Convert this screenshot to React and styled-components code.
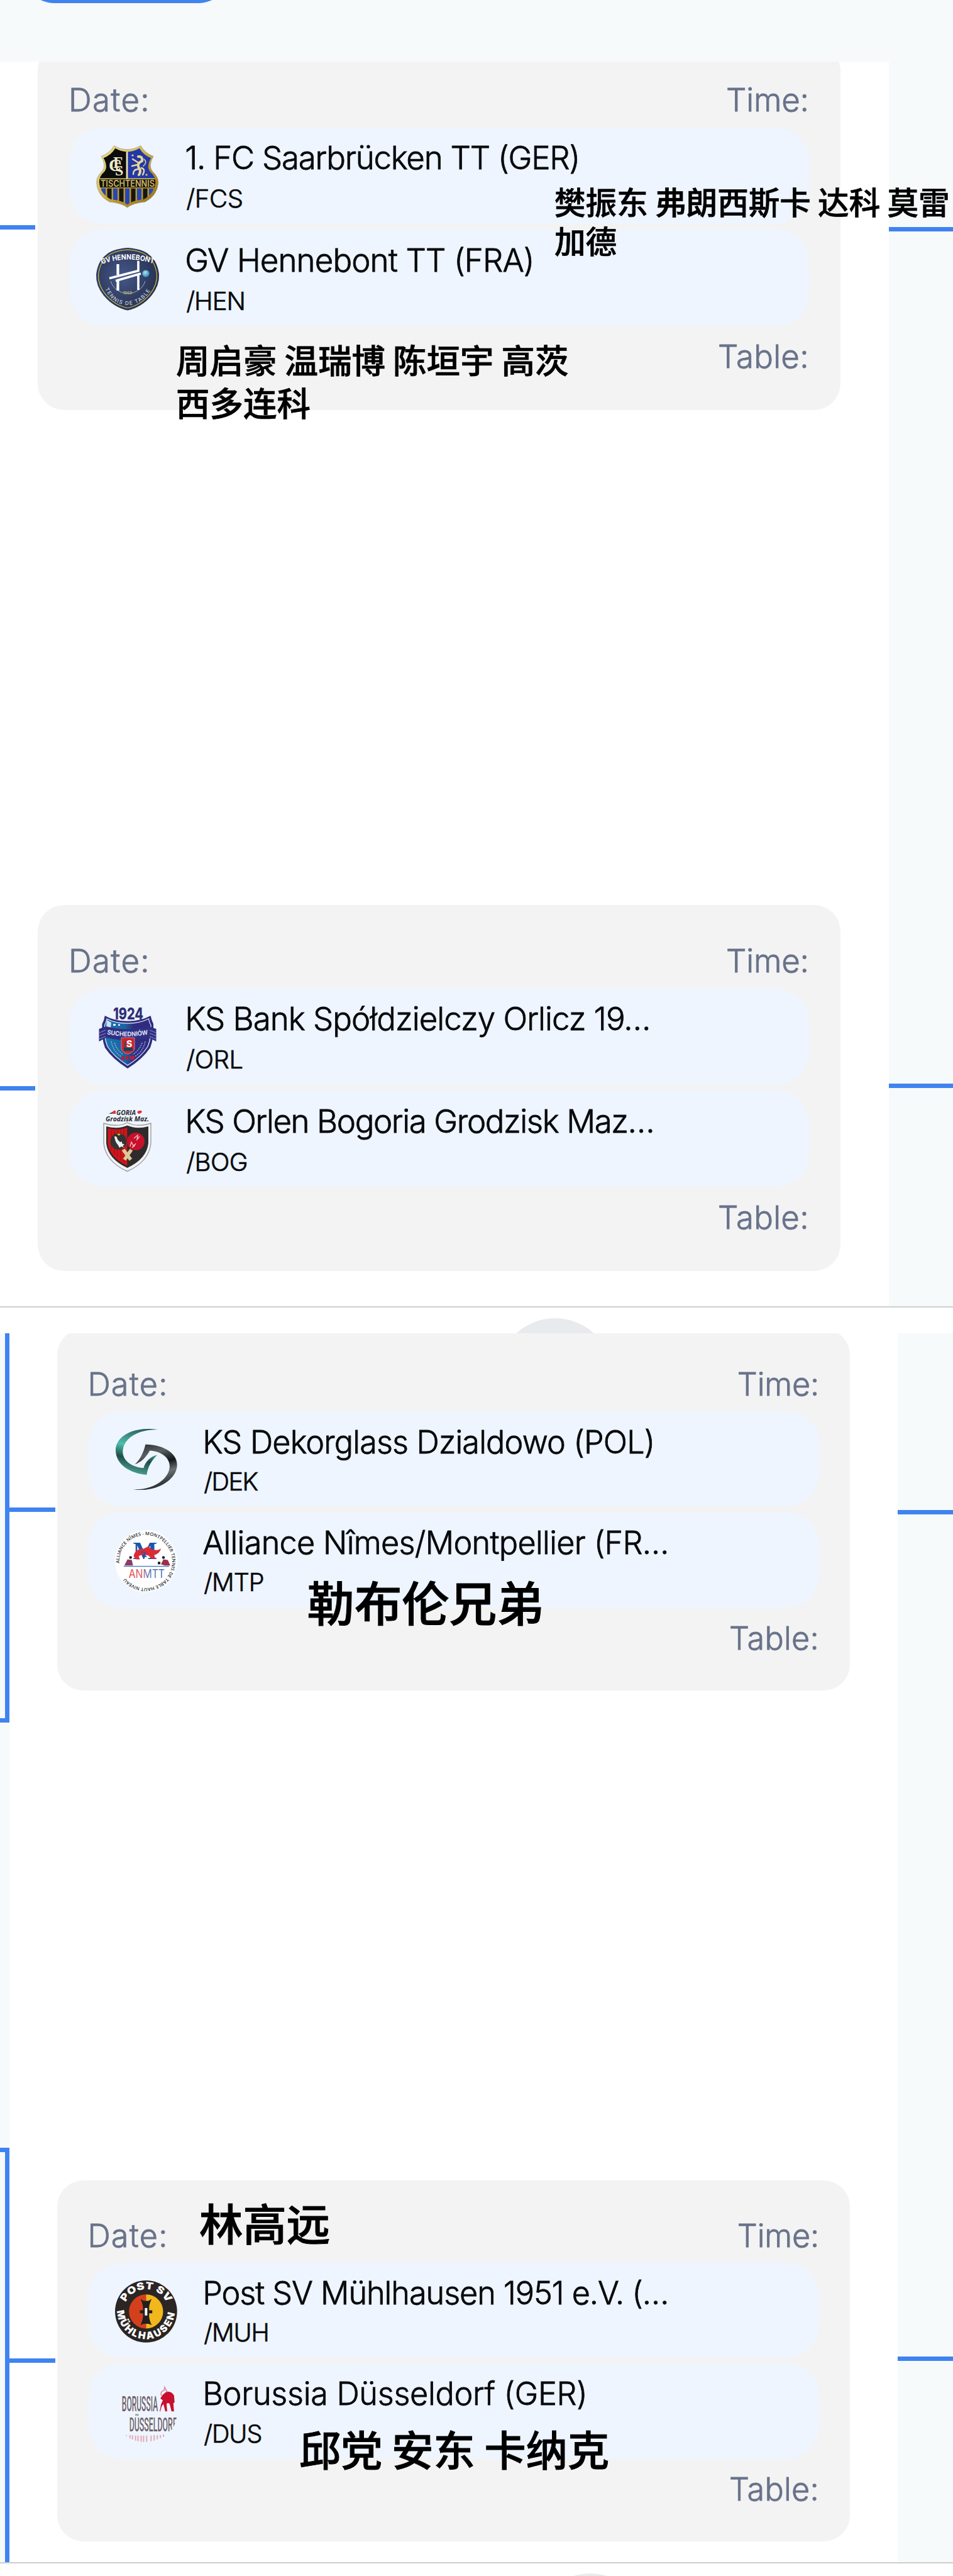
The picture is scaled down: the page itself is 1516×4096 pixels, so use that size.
import styled, { createGlobalStyle } from "styled-components";

const GlobalStyle = createGlobalStyle`
  :root {
    --blue: #3f83f0;
    --rail: #f6fafb;
    --card: #f3f3f3;
    --pill: #eef5ff;
    --muted: #68728a;
    --ink: #08090c;
  }
  * {
    box-sizing: border-box;
  }
  body {
    margin: 0;
    background: #fff;
    font-family: Inter, "Noto Sans CJK SC", sans-serif;
  }
`;

/* club crests */

const Saarbruecken = () => {
  const shield =
    "M28.6 .6Q39 7 49.5 6.5Q60 7 70.8 .6Q78 13 91 17.5Q82 33 90 42Q99 50 98.8 60Q97 80 78 90Q58 92 49.5 99Q41 92 21 90Q2 80 .6 60Q0 50 9 42Q17 33 8 17.5Q21 13 28.6 .6Z";
  return (
    <Crest viewBox="0 0 100 100">
      <defs>
        <linearGradient id="gold" x1="0" y1="0" x2="1" y2="1">
          <stop offset="0" stopColor="#f0e08c" />
          <stop offset=".35" stopColor="#d9c363" />
          <stop offset=".6" stopColor="#c19a2c" />
          <stop offset="1" stopColor="#8f6c16" />
        </linearGradient>
        <clipPath id="fcsInner">
          <path d={shield} transform="translate(4.4 4.2) scale(.91)" />
        </clipPath>
      </defs>
      <path d={shield} fill="url(#gold)" stroke="#8d9099" strokeWidth=".6" />
      <g clipPath="url(#fcsInner)">
        <rect width="49" height="54" fill="#0b0c0b" />
        <rect x="49" width="51" height="54" fill="#2438a8" />
        <rect x="47.6" width="2.8" height="54" fill="#e9e4b6" />
        <rect y="53" width="100" height="15" fill="#14130c" />
        <rect y="52.5" width="100" height="1.6" fill="#d9c363" />
        <rect y="67" width="100" height="1.6" fill="#b99534" />
        <rect y="68.6" width="100" height="32" fill="#b99534" />
        {[8, 17.5, 27, 36.5, 46, 55.5, 65, 74.5, 84].map((x, i) => (
          <rect
            key={x}
            x={x}
            y="68.6"
            width="7"
            height="32"
            fill={i % 2 ? "#15170f" : "#2747b5"}
          />
        ))}
      </g>
      <g fill="#efe9c8" fontFamily="Liberation Serif" fontWeight="700">
        <text x="20" y="41" fontSize="28">C</text>
        <text x="27" y="36" fontSize="25">F</text>
        <text x="30" y="48" fontSize="24">S</text>
      </g>
      <g fill="none" stroke="#e6d79a" strokeLinecap="round">
        <path d="M67 18Q74 17 73 25Q64 29 68 36Q72 41 68 47" strokeWidth="4" />
        <path d="M66 27L58 22M65 31L57 33M67 38Q59 38 59 46M72 36Q79 38 74 47" strokeWidth="2.4" />
        <path d="M75 33Q82 27 76 22" strokeWidth="1.6" />
      </g>
      <circle cx="58" cy="16" r="1.6" fill="#e6d79a" />
      <circle cx="80" cy="47" r="1.8" fill="#c9b25a" />
      <text
        x="7"
        y="65.6"
        fontSize="14"
        fontFamily="Inter"
        fontWeight="600"
        fill="#cdb565"
        textLength="86"
        lengthAdjust="spacingAndGlyphs"
      >
        TISCHTENNIS
      </text>
    </Crest>
  );
};

const Hennebont = () => {
  const shield =
    "M50 0Q75 2 84 11Q97 20 100 42Q101 60 88 76Q72 95 50 99.5Q28 95 12 76Q-1 60 0 42Q3 20 16 11Q25 2 50 0Z";
  return (
    <Crest viewBox="0 0 100 100">
      <defs>
        <radialGradient id="henBg" cx=".42" cy=".45" r=".6">
          <stop offset="0" stopColor="#45588a" />
          <stop offset="1" stopColor="#26304e" />
        </radialGradient>
        <radialGradient id="henBall" cx=".4" cy=".35" r=".7">
          <stop offset="0" stopColor="#a8e2f3" />
          <stop offset="1" stopColor="#2b86b4" />
        </radialGradient>
        <path id="henTop" d="M9 26Q50 11 93 26" />
        <path id="henBottom" d="M14 65Q26 91 50 91Q74 91 88 64" />
      </defs>
      <path d={shield} fill="url(#henBg)" />
      <path
        d={shield}
        transform="translate(3.5 3.2) scale(.93)"
        fill="none"
        stroke="#c7b845"
        strokeWidth="1.3"
      />
      <g fontFamily="Inter" fontWeight="700">
        <text fontSize="11.5" fill="#fff">
          <textPath href="#henTop" textLength="84" lengthAdjust="spacingAndGlyphs">
            GV HENNEBONT
          </textPath>
        </text>
        <text fontSize="8.4" fontWeight="500" fill="#c9cedd">
          <textPath href="#henBottom" textLength="92">TENNIS DE TABLE</textPath>
        </text>
        <text x="42.5" y="73.5" fontSize="6" fill="#b5a552">1969</text>
      </g>
      <path d="M23 53A29 29 0 0 0 78 53" fill="none" stroke="#aeb8d0" strokeWidth=".9" />
      <g fill="none" stroke="#fff" strokeWidth="4.2">
        <path d="M34.5 26V43M34.5 52V68" />
        <path d="M67 21V36.5L21 48.5" strokeWidth="3.6" />
        <path d="M31 52.5L71 41M67 43V67" strokeWidth="3.6" />
      </g>
      <circle cx="79" cy="41" r="5.6" fill="url(#henBall)" />
    </Crest>
  );
};

const Orlicz = () => (
  <Crest viewBox="0 0 100 100">
    <defs>
      <linearGradient id="orl" x1="0" y1="0" x2="1" y2="0">
        <stop offset="0" stopColor="#1879b2" />
        <stop offset=".45" stopColor="#1b62a0" />
        <stop offset=".62" stopColor="#2f2c80" />
      </linearGradient>
      <path id="orlRibbon" d="M17 44.5Q50 51 84 44.5" />
    </defs>
    <text
      x="27"
      y="20.5"
      fontSize="26"
      fontFamily="Inter"
      fontWeight="800"
      fill="#2e2f73"
      textLength="48"
      lengthAdjust="spacingAndGlyphs"
    >
      1924
    </text>
    <path
      d="M13.7 15Q30 24 50 23.5Q70 24 86.6 15Q88 22 91 28Q92 50 86 66Q74 84 50 99Q26 84 14 66Q8 50 9.5 28Q13 22 13.7 15Z"
      fill="#2f2c80"
    />
    <path
      d="M17 20Q32 27.5 50 27Q68 27.5 83.5 20Q84 25 87 30Q88 50 82 64Q72 80 50 94Q28 80 18 64Q12 50 13.5 30Q16 25 17 20Z"
      fill="url(#orl)"
      stroke="#e8eef8"
      strokeWidth="1.2"
    />
    <path d="M17 22L24 26L23 34H16Z" fill="#cfe2f2" />
    <path d="M27 28H31V31H27ZM35 28.5H38V31H35Z" fill="#e8f2fa" />
    <path
      d="M4.5 36L16 32Q50 41 84 32L95.5 36V56L84 50Q50 58 16 50L4.5 56Z"
      fill="#302f84"
    />
    <path
      d="M5 42L15 38M5 47L15 43M5 52L15 48M95 42L85 38M95 47L85 43M95 52L85 48"
      stroke="#8f93c4"
      strokeWidth="1"
    />
    <text fontSize="10" fontFamily="Inter" fontWeight="700" fill="#dfe3f4">
      <textPath href="#orlRibbon" textLength="66" lengthAdjust="spacingAndGlyphs">
        SUCHEDNIÓW
      </textPath>
    </text>
    <path
      d="M24 56Q27 72 41 81M29 58Q33 70 43 77M78 56Q75 72 60 81M73 58Q69 70 58 77"
      fill="none"
      stroke="#8aaed6"
      strokeWidth="1.6"
      strokeDasharray="2 1.4"
    />
    <path d="M40 50H61V68Q59 74 50.5 76Q42 74 40 68Z" fill="#c9242f" stroke="#e8a3a6" strokeWidth=".7" />
    <rect x="44" y="66" width="14" height="5" fill="#17435f" />
    <rect x="45" y="56" width="2" height="10" fill="#463e58" />
    <text x="48" y="64.5" fontSize="14" fontFamily="Inter" fontWeight="800" fill="#fff">S</text>
    <path d="M40 79H45V85H40ZM47 79H51V85H47ZM53 79H61V85H53Z" fill="#a82345" />
  </Crest>
);

const Bogoria = () => (
  <Crest viewBox="0 0 100 100">
    <defs>
      <clipPath id="bogLeft">
        <rect width="49.5" height="100" />
      </clipPath>
    </defs>
    <g fontFamily="Open Sans" fontWeight="700" fontStyle="italic" fill="#2c2a2e">
      <text x="32" y="9.5" fontSize="11" textLength="31" lengthAdjust="spacingAndGlyphs">
        GORIA
      </text>
      <text x="15" y="20" fontSize="11" textLength="69" lengthAdjust="spacingAndGlyphs">
        Grodzisk Maz.
      </text>
    </g>
    <path d="M20 8L28 4V8Z" fill="#444" />
    <path d="M25 8Q27 2 31 3V8Z" fill="#e2343c" />
    <path d="M65 5Q69 1 73 4Q72 8 67 8Z" fill="#e2343c" />
    <path
      d="M12 23Q34 30 49.5 22Q65 30 87 23V55Q84 84 49.5 99.5Q15 84 12 55Z"
      fill="#f2f2f3"
      stroke="#9c9ea3"
      strokeWidth="1.4"
    />
    <path
      d="M16 28Q35 33 49.5 26.5Q64 33 83 28V55Q80 80 49.5 94Q19 80 16 55Z"
      fill="#2d2b2c"
    />
    <path
      clipPath="url(#bogLeft)"
      d="M18.5 31Q36 35 49.5 29.5V91Q21 77 18.5 55Z"
      fill="#cf151b"
    />
    <path d="M24 34V66M29 34V72M34 34V77M39 33V82M44 32V85" stroke="#8f1216" strokeWidth=".9" />
    <path d="M43 65L55 81M56 65L45 81" stroke="#dfc795" strokeWidth="5.5" />
    <circle cx="35.5" cy="52" r="13" fill="#333" />
    <circle cx="63" cy="52" r="14" fill="#c8102a" />
    <path
      d="M29 44Q33 43 34 49L38 53L41 52V55L45 57L42 59L45 62L40 60L37 62L35 58Q30 53 29 44Z"
      fill="#f1f1f0"
    />
    <path d="M33 39.5L39 40L36 43Z" fill="#c7d42b" />
    <path
      d="M60 47L66 42L65 49L69 44M54 60L56 53L60 60L63 55M57 62L61 57"
      fill="none"
      stroke="#f2c6c8"
      strokeWidth="1.3"
    />
  </Crest>
);

const Dekorglass = () => (
  <Crest viewBox="0 0 100 100">
    <defs>
      <linearGradient id="dekGreen" x1=".6" y1="0" x2=".4" y2="1">
        <stop offset="0" stopColor="#2c5f5c" />
        <stop offset=".4" stopColor="#4fbdad" />
        <stop offset=".66" stopColor="#1e4f48" />
        <stop offset="1" stopColor="#4ea898" />
      </linearGradient>
      <linearGradient id="dekDark" x1="0" y1="0" x2=".3" y2="1">
        <stop offset="0" stopColor="#23282b" />
        <stop offset=".3" stopColor="#5b6063" />
        <stop offset=".55" stopColor="#14181b" />
        <stop offset=".75" stopColor="#6b7174" />
        <stop offset="1" stopColor="#2d3235" />
      </linearGradient>
    </defs>
    <path
      d="M70 1.5C30 -5 1 12 1 34C1 58 25 72 51 74C53 60 60 50 68 42C58 44 49 52 46 63C28 62 12.5 52 12.5 37C12.5 14 40 0 70 1.5Z"
      fill="url(#dekGreen)"
    />
    <path
      d="M32 57C40 50 46 38 49 25C75 25 100 38 100 58C100 82 66 103 29 97.5C62 99 88 80 88 60C88 46 74 36 56 35C50 46 42 54 32 57Z"
      fill="url(#dekDark)"
    />
  </Crest>
);

const Montpellier = () => (
  <Crest viewBox="0 0 100 100">
    <defs>
      <path id="mtpRing" d="M14 74A42.5 42.5 0 1 1 14.2 74.3" />
      <linearGradient id="mtpText" x1="0" y1="0" x2="1" y2="0">
        <stop offset="0" stopColor="#e4474e" />
        <stop offset=".35" stopColor="#d9636e" />
        <stop offset=".55" stopColor="#5b78b8" />
        <stop offset="1" stopColor="#3f6cb5" />
      </linearGradient>
    </defs>
    <circle cx="50" cy="50" r="50" fill="#fff" />
    <text fontSize="7.4" fontFamily="Open Sans" fontWeight="600" fill="#2f2f33">
      <textPath href="#mtpRing" startOffset="22" textLength="240" lengthAdjust="spacingAndGlyphs">
        ALLIANCE NÎMES - MONTPELLIER TENNIS DE TABLE HAUT NIVEAU
      </textPath>
    </text>
    <text
      x="29"
      y="46.5"
      fontSize="41"
      fontFamily="Liberation Serif"
      fontWeight="700"
      fill="#1c56ab"
      textLength="39"
      lengthAdjust="spacingAndGlyphs"
    >
      M
    </text>
    <path
      d="M30 42Q32 30 46 30L54 26L59 31Q70 34 74 29Q72 39 62 40L66 46H59L54 41Q44 38 38 42L40 47H34Z"
      fill="#dc2b36"
    />
    <path d="M41 35L49 36L45 41L51 43" fill="none" stroke="#1c56ab" strokeWidth="1.5" />
    <path d="M15 57L20 47L27 48L29 57Z" fill="#8c3c62" />
    <path d="M74 55L78 47L85 48L89 57H80Z" fill="#9b3049" />
    <circle cx="25" cy="44" r="2.3" fill="#23242c" />
    <circle cx="78" cy="44" r="2.3" fill="#23242c" />
    <rect x="69" y="51" width="4" height="4" fill="#16171c" />
    <rect x="14" y="57.6" width="73" height="1.4" fill="#4f79bf" />
    <text
      x="22"
      y="77"
      fontSize="19.5"
      fontFamily="Inter"
      fill="url(#mtpText)"
      textLength="58"
      lengthAdjust="spacingAndGlyphs"
    >
      ANMTT
    </text>
  </Crest>
);

const Muehlhausen = () => (
  <Crest viewBox="0 0 100 100">
    <defs>
      <path id="muhTop" d="M16.5 37A36 36 0 0 1 83.5 37" />
      <path id="muhBottom" d="M3.5 48A46.4 46.4 0 0 0 96.5 48" />
    </defs>
    <circle cx="50" cy="50" r="50" fill="#2b2523" />
    <path d="M50 22.5A27.5 27.5 0 0 0 50 77.5Z" fill="#d5401c" />
    <path d="M50 22.5A27.5 27.5 0 0 1 50 77.5Z" fill="#f2b71d" />
    <path
      d="M41 30L46 33H54L59 30Q54 40 55 48H60V53H55Q54 62 59 72L54 70H46L41 72Q46 62 45 53H40V48H45Q46 40 41 30Z"
      fill="#231f1e"
    />
    <rect x="48" y="44.5" width="4" height="12" fill="#fff" />
    <g fontFamily="Inter" fontWeight="900" fill="#fff">
      <text fontSize="16">
        <textPath href="#muhTop" startOffset="2" textLength="83" lengthAdjust="spacingAndGlyphs">
          POST SV
        </textPath>
      </text>
      <text fontSize="16">
        <textPath href="#muhBottom" startOffset="1" textLength="140">
          MÜHLHAUSEN
        </textPath>
      </text>
    </g>
  </Crest>
);

const Duesseldorf = () => (
  <Crest viewBox="0 0 100 100">
    <defs>
      <clipPath id="dusClip">
        <circle cx="50" cy="50" r="50" />
      </clipPath>
    </defs>
    <g clipPath="url(#dusClip)" fontFamily="Roboto" fontWeight="500" fill="#6f626a">
      <text x="11" y="49" fontSize="34" textLength="58" lengthAdjust="spacingAndGlyphs">
        BORUSSIA
      </text>
      <text x="23" y="81" fontSize="31" textLength="77" lengthAdjust="spacingAndGlyphs">
        DÜSSELDORF
      </text>
      <path
        d="M18 87V90M24 87V93M28 87V94M33 88V96M37 88V97M42 88V98M46 88V98M51 88V98M58 88V97M63 87V96M68 87V94M73 87V92M78 86V90"
        stroke="#e3a9b6"
        strokeWidth="2"
      />
    </g>
    <path
      d="M73 28L77 22L83 17Q91 16 95 23L96 34L94 36L95 49H91L88 37Q85 34 83 37L84 49H81L78 37L75 41L73 49H72L74 38L77 31Z"
      fill="#c8102e"
    />
    <path d="M75 24Q72 17 79 15L80 10L84 18" fill="none" stroke="#dd8d9b" strokeWidth="1.8" />
  </Crest>
);

const semiLeft = [
  {
    teams: [
      { name: "1. FC Saarbrücken TT (GER)", code: "/FCS", Logo: Saarbruecken, fit: [-0.0243, -0.0075] },
      { name: "GV Hennebont TT (FRA)", code: "/HEN", Logo: Hennebont, fit: [-0.0175, -0.026] },
    ],
    notes: [
      { x: 822, y: 218, size: 49.6, line: 62.5, text: "樊振东 弗朗西斯卡 达科 莫雷\n加德" },
      { x: 220, y: 467.5, size: 53.5, line: 67.5, text: "周启豪 温瑞博 陈垣宇 高茨\n西多连科" },
    ],
  },
  {
    teams: [
      { name: "KS Bank Spółdzielczy Orlicz 19…", code: "/ORL", Logo: Orlicz, fit: [-0.019, -0.012] },
      { name: "KS Orlen Bogoria Grodzisk Maz…", code: "/BOG", Logo: Bogoria, fit: [-0.0276, -0.014] },
    ],
  },
];

const semiRight = [
  {
    teams: [
      { name: "KS Dekorglass Dzialdowo (POL)", code: "/DEK", Logo: Dekorglass, fit: [-0.0165, -0.036] },
      { name: "Alliance Nîmes/Montpellier (FR…", code: "/MTP", Logo: Montpellier, fit: [-0.0132, -0.023] },
    ],
    notes: [{ x: 397.5, y: 388, size: 75.4, line: 90, text: "勒布伦兄弟" }],
  },
  {
    teams: [
      { name: "Post SV Mühlhausen 1951 e.V. (…", code: "/MUH", Logo: Muehlhausen, fit: [-0.0206, -0.025] },
      { name: "Borussia Düsseldorf (GER)", code: "/DUS", Logo: Duesseldorf, fit: [-0.0057, -0.025] },
    ],
    notes: [
      { x: 226, y: 24.5, size: 69.4, line: 84, text: "林高远" },
      { x: 385, y: 385, size: 66.2, line: 80, text: "邱党 安东 卡纳克" },
    ],
  },
];

const MatchCard = ({ match }) => (
  <Card>
    <Meta>
      <Label $fit={0.0255}>Date:</Label>
      <Label $fit={-0.004}>Time:</Label>
    </Meta>
    <Teams>
      {match.teams.map(({ name, code, Logo, fit }) => (
        <Team key={code}>
          <Logo />
          <div>
            <TeamName $fit={fit[0]}>{name}</TeamName>
            <TeamCode $fit={fit[1]}>{code}</TeamCode>
          </div>
        </Team>
      ))}
    </Teams>
    <Footer>
      <Label $fit={0.005}>Table:</Label>
    </Footer>
    {match.notes?.map((note) => (
      <Note key={note.text} $x={note.x} $y={note.y} $size={note.size} $line={note.line}>
        {note.text}
      </Note>
    ))}
  </Card>
);

const App = () => {
  return (
    <Page>
      <GlobalStyle />
      <Header>
        <RoundButton />
      </Header>

      <Stage $height={1979} $columns="60px 1276.8px 77px 1fr">
        <Connectors $width={56}>
          <Wire $gap={260} />
          <Wire $gap={1362} />
        </Connectors>
        <Matches $lift={-28.2} $gap={787}>
          {semiLeft.map((match) => (
            <MatchCard key={match.teams[0].code} match={match} />
          ))}
        </Matches>
        <div />
        <Connectors $shaded>
          <Wire $gap={263} />
          <Wire $gap={1355} />
        </Connectors>
      </Stage>
      <Divider />

      <Strip $height={41}>
        <Badge $left={792} $top={17} />
      </Strip>
      <Stage $height={1954} $unit={0.9873} $columns="15px 76px 1261.3px 76px 1fr">
        <Rail>
          <Bracket $edge="bottom" $height={619} />
          <Bracket $edge="top" $height={659} />
        </Rail>
        <Connectors $width={73}>
          <Wire $gap={277} />
          <Wire $gap={1346} />
        </Connectors>
        <Matches $lift={-6.7} $gap={778.5}>
          {semiRight.map((match) => (
            <MatchCard key={match.teams[0].code} match={match} />
          ))}
        </Matches>
        <div />
        <Connectors $shaded>
          <Wire $gap={281} />
          <Wire $gap={1339} />
        </Connectors>
      </Stage>
      <Divider />
      <Strip $height={20}>
        <Badge $left={848} $top={16} />
      </Strip>
    </Page>
  );
};
export default App;

const Page = styled.main`
  width: 1516px;
  height: 4096px;
  overflow: hidden;
  background: #fff;
`;

const Header = styled.header`
  display: flex;
  align-items: flex-end;
  height: 98px;
  padding: 0 0 93px 38px;
  background: var(--rail);
`;

const RoundButton = styled.div`
  flex: none;
  width: 326px;
  height: 96px;
  border-radius: 48px;
  background: var(--blue);
`;

const Stage = styled.section`
  --u: ${({ $unit = 1 }) => $unit}px;
  display: grid;
  grid-template-columns: ${({ $columns }) => $columns};
  height: ${({ $height }) => $height}px;
  overflow: hidden;
`;

const Connectors = styled.div`
  width: ${({ $width }) => ($width ? `${$width}px` : "auto")};
  background: ${({ $shaded }) => ($shaded ? "var(--rail)" : "transparent")};
  display: flex;
  flex-direction: column;
`;

const Wire = styled.div`
  flex: none;
  height: 7px;
  margin-top: ${({ $gap }) => $gap}px;
  background: var(--blue);
`;

const Rail = styled.div`
  display: flex;
  flex-direction: column;
  justify-content: space-between;
  background: var(--rail);
`;

const Bracket = styled.div`
  height: ${({ $height }) => $height}px;
  border: 0 solid var(--blue);
  border-right-width: 7px;
  border-${({ $edge }) => $edge}-width: 7px;
`;

const Matches = styled.div`
  display: flex;
  flex-direction: column;
  gap: ${({ $gap }) => $gap}px;
  margin-top: ${({ $lift }) => $lift}px;
`;

const Card = styled.article`
  position: relative;
  flex: none;
  padding: calc(var(--u) * 56.8) calc(var(--u) * 50) calc(var(--u) * 52.8)
    calc(var(--u) * 51);
  border-radius: calc(var(--u) * 42);
  background: var(--card);
`;

const Meta = styled.div`
  display: flex;
  justify-content: space-between;
  margin: 0 0 calc(var(--u) * 12) calc(var(--u) * -2);
`;

const Footer = styled.div`
  display: flex;
  justify-content: flex-end;
  margin-top: calc(var(--u) * 16.9);
`;

const Label = styled.span`
  font-size: calc(var(--u) * 51);
  line-height: calc(var(--u) * 64);
  font-weight: 300;
  -webkit-text-stroke: 0.8px currentColor;
  letter-spacing: ${({ $fit }) => $fit}em;
  color: var(--muted);
`;

const Teams = styled.div`
  display: flex;
  flex-direction: column;
  gap: calc(var(--u) * 9.7);
`;

const Team = styled.div`
  display: flex;
  align-items: flex-start;
  gap: calc(var(--u) * 41.2);
  height: calc(var(--u) * 153);
  padding: calc(var(--u) * 16.3) 0 0 calc(var(--u) * 42);
  border-radius: calc(var(--u) * 52);
  background: var(--pill);
  color: var(--ink);
  white-space: nowrap;
`;

const Crest = styled.svg`
  flex: none;
  width: calc(var(--u) * 100);
  height: calc(var(--u) * 100);
  margin-top: calc(var(--u) * 12.1);
  overflow: visible;
`;

const TeamName = styled.div`
  font-size: calc(var(--u) * 51);
  line-height: calc(var(--u) * 64);
  font-weight: 300;
  -webkit-text-stroke: 0.8px currentColor;
  letter-spacing: ${({ $fit }) => $fit}em;
`;

const TeamCode = styled.div`
  margin: calc(var(--u) * 9.3) 0 0 calc(var(--u) * 2);
  font-size: calc(var(--u) * 40);
  line-height: calc(var(--u) * 48);
  font-weight: 300;
  -webkit-text-stroke: 0.7px currentColor;
  letter-spacing: ${({ $fit }) => $fit}em;
`;

/* line-up notes laid over the cards */
const Note = styled.p`
  position: absolute;
  z-index: 1;
  left: ${({ $x }) => $x}px;
  top: ${({ $y }) => $y}px;
  margin: 0;
  font-family: "Noto Sans CJK SC", sans-serif;
  font-size: ${({ $size }) => $size}px;
  line-height: ${({ $line }) => $line}px;
  font-weight: 500;
  -webkit-text-stroke: 0.014em #000;
  color: #000;
  white-space: pre;
`;

const Divider = styled.div`
  height: 2px;
  background: #cdced0;
`;

const Strip = styled.div`
  display: flex;
  align-items: flex-start;
  height: ${({ $height }) => $height}px;
  overflow: hidden;
`;

const Badge = styled.div`
  flex: none;
  width: 182px;
  height: 182px;
  margin: ${({ $top, $left }) => `${$top}px 0 0 ${$left}px`};
  border-radius: 50%;
  background: #e9eaee;
`;
